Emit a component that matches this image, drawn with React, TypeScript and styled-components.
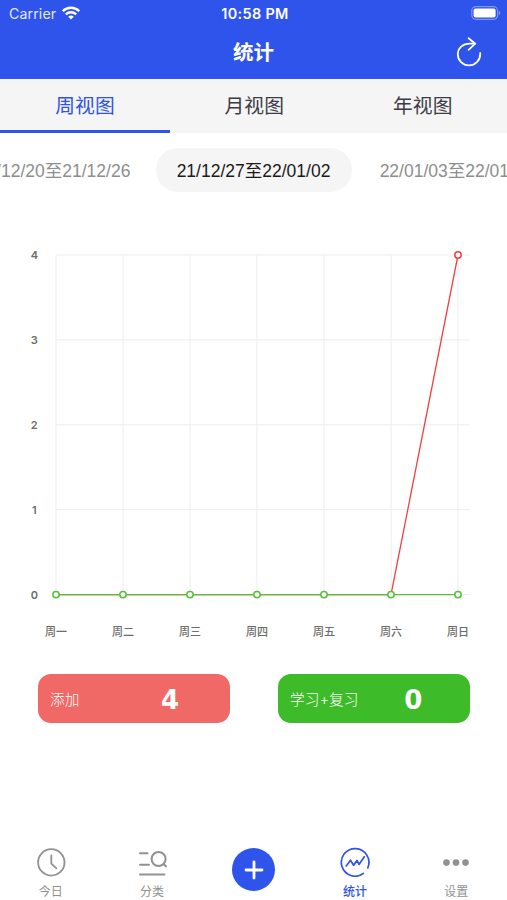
import React from 'react';
import styled, { createGlobalStyle } from 'styled-components';

const BLUE = '#2f54eb';
const RED = '#f2403f';
const GREEN = '#57bf3a';

const GlobalStyle = createGlobalStyle`
  * {
    box-sizing: border-box;
  }

  body {
    margin: 0;
    background: #ffffff;
    font-family: Inter, 'Noto Sans CJK SC', sans-serif;
  }
`

const Screen = styled.div`
  display: flex;
  flex-direction: column;
  width: 507px;
  height: 900px;
  overflow: hidden;
  background: #ffffff;
`

const Header = styled.header`
  height: 79px;
  flex: none;
  background: ${BLUE};
  color: #ffffff;
`

const StatusBar = styled.div`
  display: grid;
  grid-template-columns: 1fr auto 1fr;
  align-items: center;
  height: 28px;
  padding: 0 6px 2px 9px;
  font-size: 14.2px;
`

const Carrier = styled.span`
  display: flex;
  align-items: center;
  gap: 6px;
  color: #e3e8fd;
  letter-spacing: 0.1px;
`

const Time = styled.span`
  font-size: 14.4px;
  font-weight: 600;
  letter-spacing: 0.35px;
`

const Battery = styled.svg`
  justify-self: end;
`

const NavBar = styled.div`
  display: grid;
  grid-template-columns: 1fr auto 1fr;
  align-items: center;
  height: 49px;
  padding: 0 24px;
`

const Title = styled.h1`
  grid-column: 2;
  margin: 0;
  font-size: 20.5px;
  line-height: 28px;
  font-weight: 700;
`

const RefreshButton = styled.button`
  justify-self: end;
  width: 28px;
  height: 32px;
  padding: 0;
  border: none;
  background: none;
  color: #ffffff;

  svg {
    display: block;
  }
`

const ViewTabs = styled.nav`
  display: flex;
  flex: none;
  height: 54px;
  background: #f5f5f5;
`

const ViewTab = styled.button<{ $active?: boolean }>`
  flex: 1;
  padding: 0 0 1px;
  border: none;
  border-bottom: 3px solid ${p => (p.$active ? BLUE : 'transparent')};
  background: none;
  color: ${p => (p.$active ? BLUE : '#3c3c46')};
  font-family: inherit;
  font-size: 19.8px;

  &:first-child {
    flex: 0 0 170px;
  }
`

const WeekPicker = styled.div`
  display: flex;
  flex: none;
  justify-content: center;
  gap: 4px;
  margin-top: 15px;
  overflow: hidden;
`

const Week = styled.button<{ $active?: boolean }>`
  flex: none;
  width: 196px;
  height: 44px;
  padding: 0 0 2px;
  border: none;
  border-radius: 22px;
  background: ${p => (p.$active ? '#f5f5f5' : 'transparent')};
  color: ${p => (p.$active ? '#1a1a1a' : '#8e8e8e')};
  font-family: 'Liberation Sans', 'Noto Sans CJK SC', sans-serif;
  font-size: 17.5px;
  white-space: nowrap;

  &:last-child {
    padding-left: 6px;
  }
`

const Chart = styled.svg`
  display: block;
  flex: none;
  margin-top: 38px;
  font-family: Inter, 'Noto Sans CJK SC', sans-serif;
  font-size: 11px;
  font-weight: 500;
`

const Cards = styled.div`
  display: flex;
  flex: none;
  justify-content: space-between;
  padding: 0 37px 0 38px;
  margin-top: 24px;
`

const Card = styled.div<{ $color: string }>`
  display: flex;
  align-items: center;
  width: 192px;
  height: 49px;
  padding: 0 0 1px 12px;
  border-radius: 13px;
  background: ${p => p.$color};
  color: #ffffff;
`

const CardLabel = styled.span`
  min-width: 65px;
  margin-right: 18px;
  font-size: 14.7px;
  font-weight: 300;
  white-space: nowrap;
`

const CardValue = styled.span`
  width: 74px;
  padding-top: 3px;
  text-align: center;
  font-family: 'DejaVu Sans', sans-serif;
  font-size: 26px;
  line-height: 32px;
  font-weight: 700;
`

const TabBar = styled.nav`
  display: flex;
  flex: none;
  height: 61px;
  margin-top: auto;
`

const TabItem = styled.button<{ $active?: boolean }>`
  display: flex;
  flex: 1;
  flex-direction: column;
  align-items: center;
  padding: 8px 0 0;
  border: none;
  background: none;
  color: ${p => (p.$active ? BLUE : '#919191')};
  font-family: inherit;
  font-size: 12px;
  font-weight: ${p => (p.$active ? 500 : 400)};
  line-height: 16px;

  svg {
    display: block;
    flex: none;
    margin-bottom: 7px;
  }
`

const AddButton = styled.span`
  display: flex;
  align-items: center;
  justify-content: center;
  width: 43px;
  height: 43px;
  margin-top: 1px;
  border-radius: 50%;
  background: ${BLUE};

  svg {
    margin: 0;
  }
`

const days = ['周一', '周二', '周三', '周四', '周五', '周六', '周日'];
const added = [0, 0, 0, 0, 0, 0, 4];
const studied = [0, 0, 0, 0, 0, 0, 0];

const xAt = (i: number) => 56 + i * 67;
const yAt = (v: number) => 364.6 - v * 84.9;

function Line({ data, color }: { data: number[], color: string }) {
  return (
    <polyline
      points={data.map((v, i) => `${xAt(i)},${yAt(v)}`).join(' ')}
      fill='none'
      stroke={color}
      strokeWidth='1.3'
    />
  );
}

function Dot({ day, value, color }: { day: number, value: number, color: string }) {
  return <circle cx={xAt(day)} cy={yAt(value)} r='3.2' fill='#ffffff' stroke={color} strokeWidth='1.5' />;
}

function WeekChart() {
  return (
    <Chart width='507' height='420' viewBox='0 0 507 420'>
      {[0, 1, 2, 3, 4].map(v => (
        <g key={v}>
          <path d={`M56 ${yAt(v)}H470`} stroke='#ededed' />
          <text x='34.3' y={yAt(v) + 4} textAnchor='middle' fontWeight='600' fill='#6c6c6c'>{v}</text>
        </g>
      ))}
      {days.map((day, i) => (
        <g key={day}>
          <path d={`M${xAt(i)} ${yAt(4)}V${yAt(0)}`} stroke='#ededed' />
          <text x={xAt(i)} y='405.5' textAnchor='middle' fill='#6c6c6c'>{day}</text>
        </g>
      ))}
      <Line data={added} color={RED} />
      <Line data={studied} color={GREEN} />
      {/* a dot under an equal one would only darken its edge */}
      {added.map((v, i) => v !== studied[i] && <Dot key={i} day={i} value={v} color={RED} />)}
      {studied.map((v, i) => <Dot key={i} day={i} value={v} color={GREEN} />)}
    </Chart>
  );
}

function WifiIcon() {
  return (
    <svg width='18' height='14' viewBox='0 0 18 14' fill='none' stroke='#ffffff' strokeWidth='2.3'>
      <path d='M0.8 5.2C5.4 0.6 12.6 0.6 17.2 5.2' />
      <path d='M3.8 8.4C6.8 5.5 11.2 5.5 14.2 8.4' />
      <path d='M9 13.6L6.2 10.7Q9 8.2 11.8 10.7Z' fill='#ffffff' stroke='none' />
    </svg>
  );
}

function BatteryIcon() {
  return (
    <Battery width='31' height='14' viewBox='0 0 31 14'>
      <rect x='1.8' y='0.7' width='25.8' height='12.6' rx='4' fill='none' stroke='#7f96f3' strokeWidth='1.2' />
      <rect x='3.6' y='2.4' width='22' height='9.2' rx='2' fill='#ffffff' />
      <path d='M28.8 4.8Q30.4 5.5 30.4 7T28.8 9.2Z' fill='#7f96f3' />
    </Battery>
  );
}

function RefreshIcon() {
  return (
    <svg width='28' height='32' viewBox='0 0 28 32' fill='none' stroke='currentColor' strokeWidth='1.8' strokeLinecap='round' strokeLinejoin='round'>
      <path d='M20 6.6H14.5C8 6.6 2.8 11 2.8 17.2A11.2 11.2 0 0 0 25.2 17.2V16' />
      <path d='M13.6 1.2L20.2 6.7L13.6 12.8' />
    </svg>
  );
}

function ClockIcon() {
  return (
    <svg width='30' height='30' viewBox='0 0 30 30' fill='none' stroke='currentColor' strokeWidth='1.8' strokeLinecap='round' strokeLinejoin='round'>
      <circle cx='15.3' cy='15.4' r='13.2' />
      <path d='M15.3 8.4V16.6L20.4 21.4' />
    </svg>
  );
}

function CategoryIcon() {
  return (
    <svg width='30' height='30' viewBox='0 0 30 30' fill='none' stroke='currentColor' strokeWidth='2' strokeLinecap='round'>
      <path d='M3 6.2H10.5M3 17.7H12M3 27.4H27.4' />
      <circle cx='21.6' cy='12' r='7' />
      <path d='M26.6 17L29 19.3' />
    </svg>
  );
}

function StatsIcon() {
  return (
    <svg width='30' height='30' viewBox='0 0 30 30' fill='none' stroke='currentColor' strokeWidth='1.7' strokeLinecap='round' strokeLinejoin='round'>
      <path d='M23.4 26.4A13.8 13.8 0 1 1 27.8 20.8' />
      <path d='M6.2 18.9L10.5 13.2L13.6 18.3L17 13.4L19 17.4L24.3 9.8' />
    </svg>
  );
}

function MoreIcon() {
  return (
    <svg width='30' height='30' viewBox='0 0 30 30' fill='currentColor'>
      <circle cx='5.5' cy='15.6' r='3.3' />
      <circle cx='15' cy='15.6' r='3.3' />
      <circle cx='24.5' cy='15.6' r='3.3' />
    </svg>
  );
}

export default function App() {
  return (
    <Screen>
      <GlobalStyle />
      <Header>
        <StatusBar>
          <Carrier>Carrier <WifiIcon /></Carrier>
          <Time>10:58 PM</Time>
          <BatteryIcon />
        </StatusBar>
        <NavBar>
          <Title>统计</Title>
          <RefreshButton><RefreshIcon /></RefreshButton>
        </NavBar>
      </Header>

      <ViewTabs>
        <ViewTab $active>周视图</ViewTab>
        <ViewTab>月视图</ViewTab>
        <ViewTab>年视图</ViewTab>
      </ViewTabs>

      <WeekPicker>
        <Week>21/12/20至21/12/26</Week>
        <Week $active>21/12/27至22/01/02</Week>
        <Week>22/01/03至22/01/09</Week>
      </WeekPicker>

      <WeekChart />

      <Cards>
        <Card $color='#f06966'>
          <CardLabel>添加</CardLabel>
          <CardValue>4</CardValue>
        </Card>
        <Card $color='#3dbb29'>
          <CardLabel>学习+复习</CardLabel>
          <CardValue>0</CardValue>
        </Card>
      </Cards>

      <TabBar>
        <TabItem><ClockIcon />今日</TabItem>
        <TabItem><CategoryIcon />分类</TabItem>
        <TabItem>
          <AddButton>
            <svg width='20' height='20' viewBox='0 0 20 20' stroke='#ffffff' strokeWidth='2.8' strokeLinecap='round'>
              <path d='M10 2V18M2 10H18' />
            </svg>
          </AddButton>
        </TabItem>
        <TabItem $active><StatsIcon />统计</TabItem>
        <TabItem><MoreIcon />设置</TabItem>
      </TabBar>
    </Screen>
  );
}
